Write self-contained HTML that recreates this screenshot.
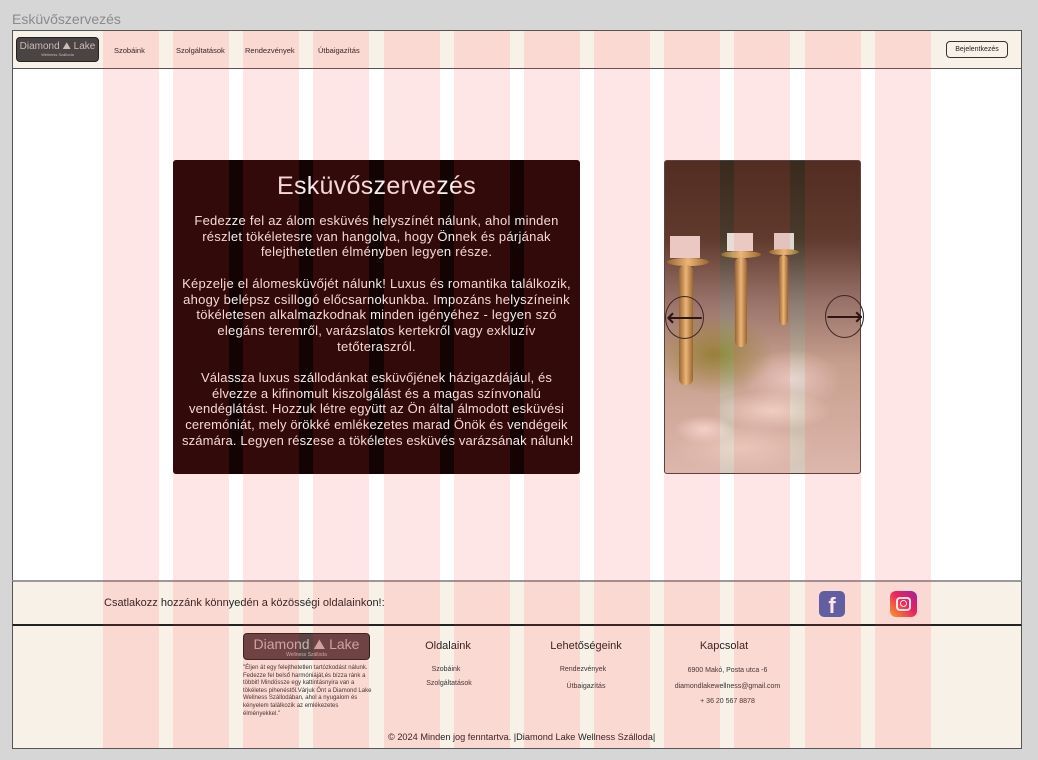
<!DOCTYPE html>
<html><head><meta charset="utf-8"><style>
*{margin:0;padding:0;box-sizing:border-box}
body{width:1038px;height:760px;background:#d6d6d6;position:relative;overflow:hidden;font-family:"Liberation Sans",sans-serif;color:#222}
.abs{position:absolute}
#title{left:12px;top:11px;font-size:14px;color:#8a8a8a}
#frame{left:12px;top:30px;width:1010px;height:719px;background:#fff;border:1px solid #555}
#hdr{left:12px;top:30px;width:1010px;height:39px;background:#f8f1e8;border:1px solid #555}
.logo{background:#4a4443;border-radius:4px;border:1px solid #222;color:#cbb;text-align:center;white-space:nowrap;overflow:hidden}
.nav{font-size:7.5px;color:#222;top:46px}
#btn{left:946px;top:41px;width:62px;height:17px;border:1px solid #333;border-radius:4px;font-size:7px;text-align:center;line-height:15px;background:#f8f1e8}
#box{left:173px;top:160px;width:407px;height:314px;background:#140303;border-radius:3px;color:#f5eeee;text-align:center;font-size:13px;line-height:15.7px;padding:11px 9px;letter-spacing:0.25px}
#box h1{font-weight:normal;font-size:25px;line-height:30px;margin-bottom:12px;letter-spacing:0.3px}
.nw{white-space:nowrap;letter-spacing:0.15px}
#img{left:664px;top:160px;width:197px;height:314px;border:1px solid #444;border-radius:3px;overflow:hidden;
background:
radial-gradient(ellipse 30px 14px at 20% 86%,#f3e6dc 0,rgba(0,0,0,0) 100%),
radial-gradient(ellipse 60px 20px at 55% 80%,#efe2d6 0,rgba(0,0,0,0) 100%),
radial-gradient(ellipse 70px 25px at 40% 92%,#e9d9cc 0,rgba(0,0,0,0) 100%),
radial-gradient(ellipse 60px 40px at 25% 62%,#8a8a3a 0,rgba(0,0,0,0) 100%),
radial-gradient(ellipse 50px 30px at 65% 70%,#e6d6cf 0,rgba(0,0,0,0) 100%),
linear-gradient(180deg,#3a2a1e 0,#4a3a2c 25%,#8a7a70 45%,#bfae9a 65%,#d9c9bd 100%)}
.candle{position:absolute;background:linear-gradient(90deg,#8a6a30,#e8c880,#8a6a30)}
.arr{width:39px;height:43px;border:1px solid #222;border-radius:50%;font-size:26px;text-align:center;line-height:40px;color:#111}
#soc{left:12px;top:580px;width:1010px;height:46px;background:#f8f1e8;border:1px solid #555;border-top:2px solid #999;border-bottom:2px solid #222}
#foot{left:12px;top:626px;width:1010px;height:123px;background:#f8f1e8;border:1px solid #555;border-top:none}
.fh{font-size:11px;color:#222;text-align:center}
.fs{font-size:7px;color:#333;text-align:center}
.col{position:absolute;width:56px;background:rgba(255,60,60,0.13);pointer-events:none}
</style></head><body>
<div id="title" class="abs">Esküvőszervezés</div>
<div id="frame" class="abs"></div>
<div id="hdr" class="abs"></div>
<div class="abs logo" style="left:16px;top:37px;width:83px;height:25px;padding-top:3px;font-size:10px;line-height:11px">Diamond ⛰ Lake<div style="font-size:4px;line-height:5px">Wellness Szálloda</div></div>
<div class="abs nav" style="left:114px">Szobáink</div>
<div class="abs nav" style="left:176px">Szolgáltatások</div>
<div class="abs nav" style="left:245px">Rendezvények</div>
<div class="abs nav" style="left:318px">Útbaigazítás</div>
<div id="btn" class="abs">Bejelentkezés</div>
<div id="box" class="abs"><h1>Esküvőszervezés</h1>Fedezze fel az álom esküvés helyszínét nálunk, ahol minden<br>részlet tökéletesre van hangolva, hogy Önnek és párjának<br>felejthetetlen élményben legyen része.<br><br>Képzelje el álomesküvőjét nálunk! Luxus és romantika találkozik, ahogy belépsz csillogó előcsarnokunkba. Impozáns helyszíneink tökéletesen alkalmazkodnak minden igényéhez - legyen szó elegáns teremről, varázslatos kertekről vagy exkluzív tetőteraszról.<br><br><span class="nw">Válassza luxus szállodánkat esküvőjének házigazdájául, és</span><br><span class="nw">élvezze a kifinomult kiszolgálást és a magas színvonalú</span><br><span class="nw">vendéglátást. Hozzuk létre együtt az Ön által álmodott esküvési</span><br><span class="nw">ceremóniát, mely örökké emlékezetes marad Önök és vendégeik</span><br><span class="nw">számára. Legyen részese a tökéletes esküvés varázsának nálunk!</span></div>
<div id="img" class="abs">
<div class="abs" style="left:5px;top:75px;width:30px;height:22px;background:#e8ddd6"></div>
<div class="abs" style="left:62px;top:72px;width:26px;height:18px;background:#e8ddd6"></div>
<div class="abs" style="left:109px;top:72px;width:20px;height:17px;background:#e0d6d0"></div>
<div class="candle" style="left:2px;top:97px;width:42px;height:8px;border-radius:50%"></div>
<div class="candle" style="left:14px;top:104px;width:14px;height:120px;border-radius:6px"></div>
<div class="candle" style="left:56px;top:90px;width:40px;height:7px;border-radius:50%"></div>
<div class="candle" style="left:70px;top:96px;width:12px;height:90px;border-radius:6px"></div>
<div class="candle" style="left:104px;top:88px;width:30px;height:6px;border-radius:50%"></div>
<div class="candle" style="left:114px;top:94px;width:9px;height:70px;border-radius:5px"></div>
</div>
<div class="abs arr" style="left:665px;top:296px">⟵</div>
<div class="abs arr" style="left:825px;top:295px">⟶</div>
<div id="soc" class="abs"></div>
<div class="abs" style="left:104px;top:597px;font-size:11px;color:#222">Csatlakozz hozzánk könnyedén a közösségi oldalainkon!:</div>
<div class="abs" style="left:819px;top:591px;width:26px;height:26px;border-radius:5px;background:#4a63b0;color:#fff;font-weight:bold;font-size:22px;text-align:center;line-height:30px;overflow:hidden">f</div>
<div class="abs" style="left:890px;top:591px;width:27px;height:26px;border-radius:6px;background:linear-gradient(45deg,#f9a825,#e91e63 55%,#8e24aa)"><div style="position:absolute;left:6px;top:6px;width:15px;height:14px;border:2px solid #fff;border-radius:4px"></div><div style="position:absolute;left:10px;top:9px;width:7px;height:7px;border:1.5px solid #fff;border-radius:50%"></div></div>
<div id="foot" class="abs"></div>
<div class="abs logo" style="left:243px;top:633px;width:127px;height:27px;background:#5a4444;color:#c9b3b0;font-size:14px;line-height:15px;padding-top:3px">Diamond ⛰ Lake<div style="font-size:5px;line-height:6px">Wellness Szálloda</div></div>
<div class="abs" style="left:243px;top:665px;width:132px;font-size:6px;line-height:7.6px;color:#333">"Éljen át egy felejthetetlen tartózkodást nálunk. Fedezze fel belső harmóniáját,és bízza ránk a többit! Mindössze egy kattintásnyira van a tökéletes pihenéstől.Várjuk Önt a Diamond Lake Wellness Szállodában, ahol a nyugalom és kényelem találkozik az emlékezetes élményekkel."</div>
<div class="abs fh" style="left:398px;top:640px;width:100px">Oldalaink</div>
<div class="abs fs" style="left:396px;top:666px;width:100px">Szobáink</div>
<div class="abs fs" style="left:399px;top:680px;width:100px">Szolgáltatások</div>
<div class="abs fh" style="left:536px;top:640px;width:100px">Lehetőségeink</div>
<div class="abs fs" style="left:533px;top:666px;width:100px">Rendezvények</div>
<div class="abs fs" style="left:536px;top:683px;width:100px">Útbaigazítás</div>
<div class="abs fh" style="left:674px;top:640px;width:100px">Kapcsolat</div>
<div class="abs fs" style="left:660px;top:667px;width:135px">6900 Makó, Posta  utca -6</div>
<div class="abs fs" style="left:660px;top:683px;width:135px">diamondlakewellness@gmail.com</div>
<div class="abs fs" style="left:660px;top:698px;width:135px">+ 36 20 567 8878</div>
<div class="abs" style="left:388px;top:732px;font-size:9.2px;color:#222">© 2024 Minden jog fenntartva. |Diamond Lake Wellness Szálloda|</div>
<div class="col" style="left:103px;top:31px;height:717px"></div>
<div class="col" style="left:173px;top:31px;height:717px"></div>
<div class="col" style="left:243px;top:31px;height:717px"></div>
<div class="col" style="left:313px;top:31px;height:717px"></div>
<div class="col" style="left:384px;top:31px;height:717px"></div>
<div class="col" style="left:454px;top:31px;height:717px"></div>
<div class="col" style="left:524px;top:31px;height:717px"></div>
<div class="col" style="left:594px;top:31px;height:717px"></div>
<div class="col" style="left:664px;top:31px;height:717px"></div>
<div class="col" style="left:734px;top:31px;height:717px"></div>
<div class="col" style="left:805px;top:31px;height:717px"></div>
<div class="col" style="left:875px;top:31px;height:717px"></div>
</body></html>
